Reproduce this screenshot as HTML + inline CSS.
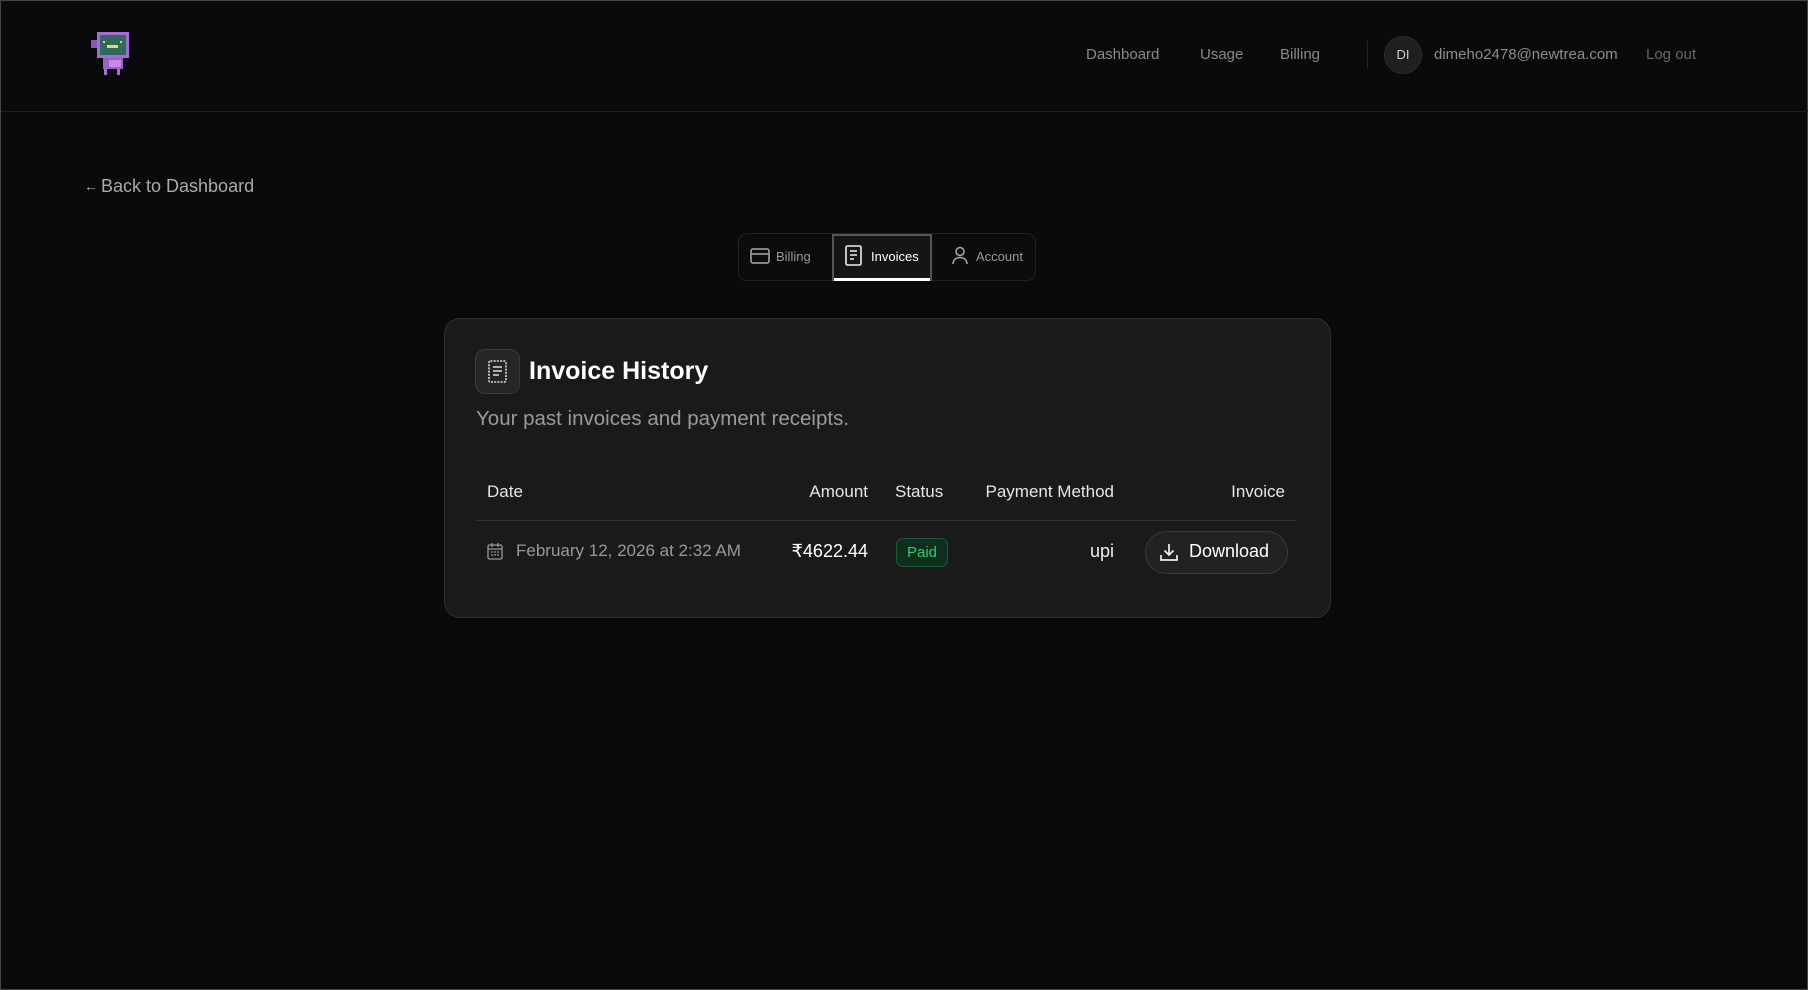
<!DOCTYPE html>
<html><head><meta charset="utf-8">
<style>
*{box-sizing:border-box;margin:0;padding:0}
body{width:1808px;height:990px;background:#0a0a0c;font-family:"Liberation Sans",sans-serif;color:#eee;position:relative;overflow:hidden;border:1px solid #444}
.a{position:absolute;white-space:nowrap}
.nav{font-size:15px;color:#8a8a8a;top:45px}
.th{font-size:17px;color:#e6e6e6;top:481px}
</style></head><body>
<div class="a" style="left:0;top:110px;width:1808px;height:1px;background:#1e1e20"></div>
<svg class="a" style="left:88px;top:28px" width="42" height="48" viewBox="0 0 42 48" shape-rendering="crispEdges">
<rect x="8" y="3" width="32" height="26" fill="#a66bd6"/><rect x="2" y="11" width="6" height="8" fill="#8a55b8"/>
<rect x="11" y="6" width="26" height="20" fill="#2e6b5e"/>
<rect x="14" y="12" width="2" height="2" fill="#e0e060"/><rect x="31" y="12" width="2" height="2" fill="#e0e060"/>
<rect x="18" y="16" width="11" height="3" fill="#e0e060"/>
<rect x="14" y="29" width="20" height="11" fill="#9a5fcc"/><rect x="20" y="31" width="12" height="7" fill="#c48ae8"/>
<rect x="15" y="40" width="3" height="6" fill="#a66bd6"/><rect x="28" y="40" width="3" height="6" fill="#a66bd6"/>
</svg>
<div class="a nav" style="left:1085px">Dashboard</div>
<div class="a nav" style="left:1199px">Usage</div>
<div class="a nav" style="left:1279px">Billing</div>
<div class="a" style="left:1366px;top:40px;width:1px;height:28px;background:#222"></div>
<div class="a" style="left:1383px;top:35px;width:38px;height:38px;border-radius:50%;background:#1f1f22;border:1px solid #2c2c2e;color:#ccc;font-size:13px;line-height:36px;text-align:center">DI</div>
<div class="a nav" style="left:1433px;color:#8e8e8e">dimeho2478@newtrea.com</div>
<div class="a nav" style="left:1645px;color:#666">Log out</div>
<div class="a" style="left:83px;top:177px;font-size:14px;color:#aaa">←</div>
<div class="a" style="left:100px;top:175px;font-size:18px;color:#aaa">Back to Dashboard</div>

<div class="a" style="left:737px;top:232px;width:298px;height:48px;border:1px solid #222;border-radius:9px;background:#0c0c0e"></div>
<svg class="a" style="left:749px;top:247px" width="20" height="16" viewBox="0 0 20 16" fill="none" stroke="#aaa" stroke-width="1.5"><rect x="1" y="1" width="18" height="14" rx="2"/><path d="M1 6h18"/></svg>
<div class="a" style="left:775px;top:248px;font-size:13px;color:#999">Billing</div>
<div class="a" style="left:831px;top:233px;width:100px;height:47px;background:#151515;border:2px solid #555;border-bottom:none"></div>
<div class="a" style="left:833px;top:277px;width:96px;height:3px;background:#fff"></div>
<svg class="a" style="left:844px;top:244px" width="17" height="21" viewBox="0 0 17 21" fill="none" stroke="#eee" stroke-width="1.6"><rect x="1" y="1" width="15" height="19" rx="1.5"/><path d="M5 6h7M5 10h7M5 14h4"/></svg>
<div class="a" style="left:870px;top:248px;font-size:13px;color:#fff">Invoices</div>
<svg class="a" style="left:950px;top:245px" width="18" height="19" viewBox="0 0 18 19" fill="none" stroke="#aaa" stroke-width="1.5"><circle cx="9" cy="5.5" r="4"/><path d="M2 18c0-4 3-6.5 7-6.5s7 2.5 7 6.5"/></svg>
<div class="a" style="left:975px;top:248px;font-size:13px;color:#999">Account</div>

<div class="a" style="left:443px;top:317px;width:887px;height:300px;background:#1a1a1a;border:1px solid #2e2e2e;border-radius:16px"></div>
<div class="a" style="left:474px;top:348px;width:45px;height:45px;border-radius:10px;background:#262626;border:1px solid #3a3a3a"></div>
<svg class="a" style="left:486px;top:358px" width="21" height="25" viewBox="0 0 21 25" fill="none" stroke="#ddd" stroke-width="1.6"><rect x="2" y="2" width="17" height="21" rx="1.5" stroke-dasharray="2 1.2"/><path d="M6 8h9M6 12h9M6 16h6"/></svg>
<div class="a" style="left:528px;top:356px;font-size:25px;font-weight:bold;color:#fff">Invoice History</div>
<div class="a" style="left:475px;top:406px;font-size:20.5px;color:#9a9a9a">Your past invoices and payment receipts.</div>
<div class="a th" style="left:486px">Date</div>
<div class="a th" style="right:939px">Amount</div>
<div class="a th" style="left:894px">Status</div>
<div class="a th" style="right:693px">Payment Method</div>
<div class="a th" style="right:522px">Invoice</div>
<div class="a" style="left:475px;top:519px;width:821px;height:1px;background:#333"></div>
<svg class="a" style="left:486px;top:541px" width="16" height="18" viewBox="0 0 16 18" fill="none" stroke="#999" stroke-width="1.3"><rect x="1" y="3" width="14" height="14" rx="1.5"/><path d="M1 7h14M5 1v4M11 1v4M4 10h2M7 10h2M10 10h2M4 13h2M7 13h2M10 13h2"/></svg>
<div class="a" style="left:515px;top:540px;font-size:17px;color:#999">February 12, 2026 at 2:32 AM</div>
<div class="a" style="right:939px;top:540px;font-size:18px;color:#fff">₹4622.44</div>
<div class="a" style="left:895px;top:537px;width:52px;height:29px;border-radius:7px;background:#0f2e1e;border:1px solid #1f5a3a;color:#2ecc71;font-size:15px;line-height:27px;text-align:center">Paid</div>
<div class="a" style="right:693px;top:540px;font-size:18px;color:#eee">upi</div>
<div class="a" style="left:1144px;top:530px;width:143px;height:43px;border-radius:22px;background:#222;border:1px solid #3a3a3a"></div>
<svg class="a" style="left:1158px;top:541px" width="20" height="20" viewBox="0 0 20 20" fill="none" stroke="#eee" stroke-width="1.7"><path d="M10 2v11M5.5 8.5 10 13l4.5-4.5M2 13v5h16v-5"/></svg>
<div class="a" style="left:1188px;top:540px;font-size:18px;color:#fff">Download</div>
</body></html>
